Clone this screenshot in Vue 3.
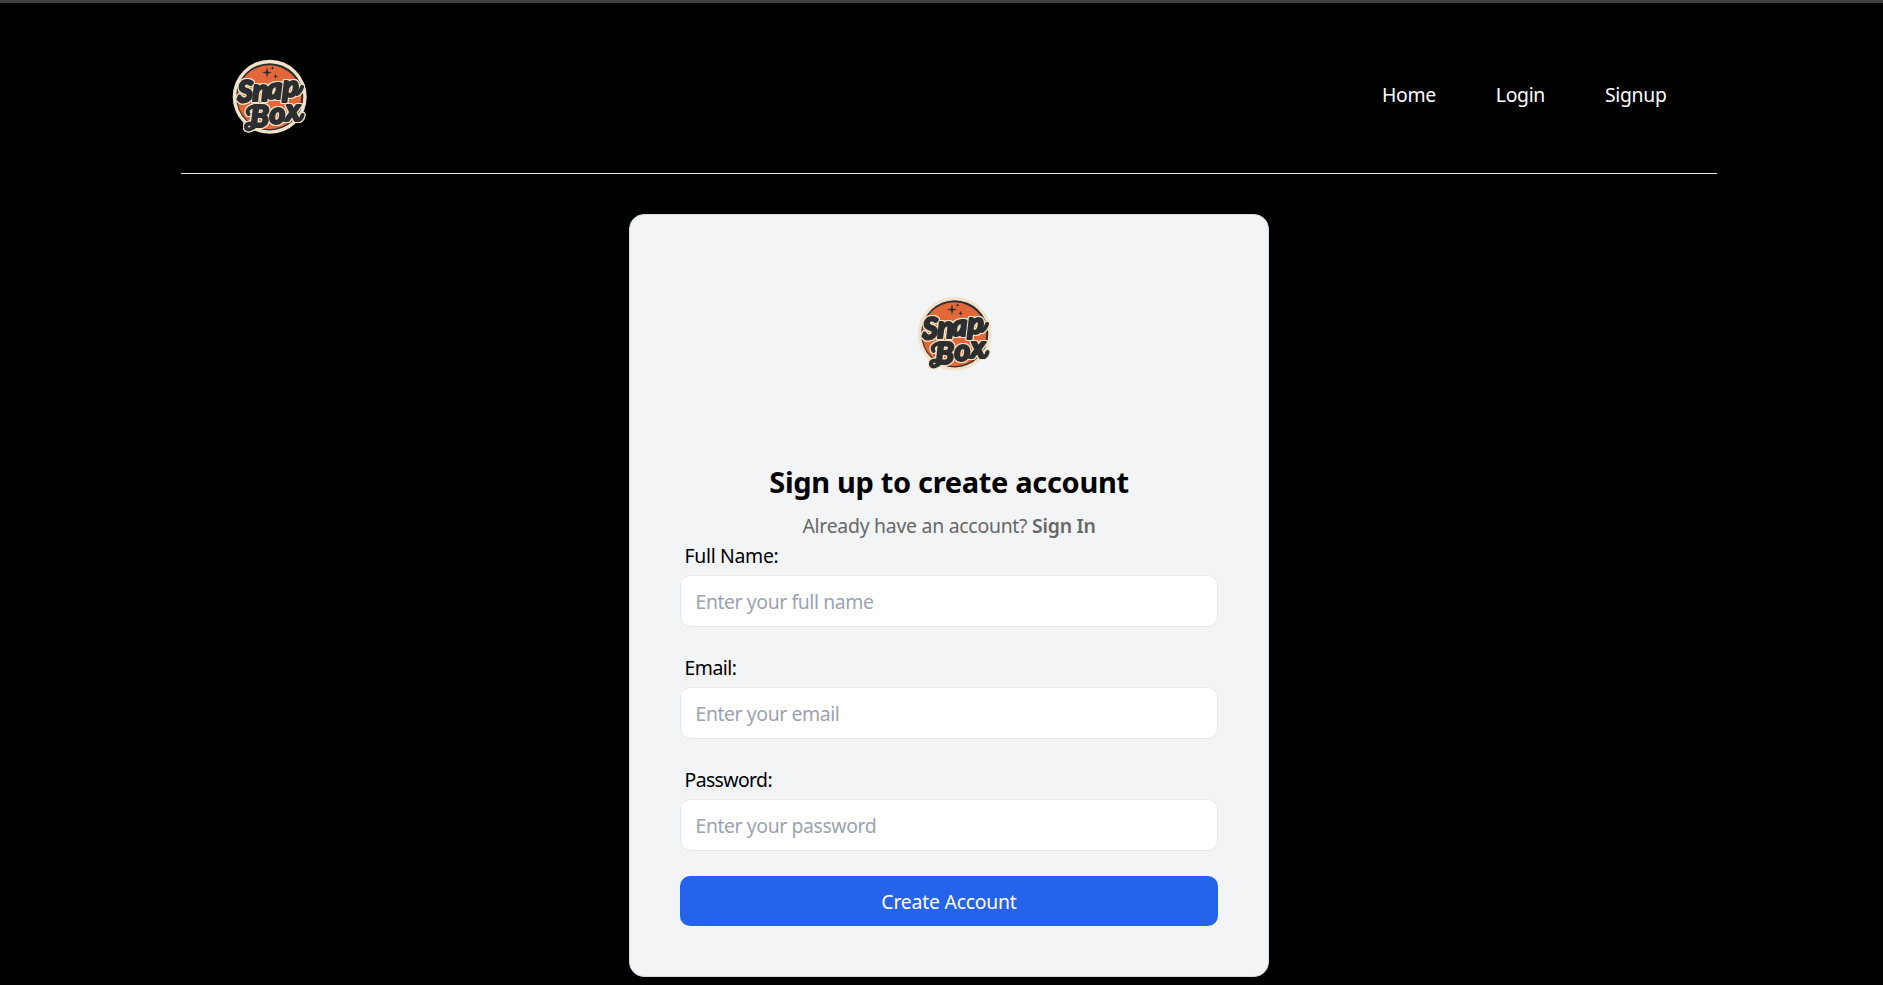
<script setup>
import { h } from 'vue'

const links = ['Home', 'Login', 'Signup']
const fields = [
  { id: 'name', label: 'Full Name:', hint: 'Enter your full name', type: 'text' },
  { id: 'email', label: 'Email:', hint: 'Enter your email', type: 'email' },
  { id: 'password', label: 'Password:', hint: 'Enter your password', type: 'password' },
]

// Cream outline around each dark word
const halo = 'filter: drop-shadow(1px 0 0 #f3dfc4) drop-shadow(-1px 0 0 #f3dfc4) drop-shadow(0 1px 0 #f3dfc4) drop-shadow(0 -1px 0 #f3dfc4)'

const word = (text, x, y, swash) =>
  h('g', { style: halo }, [
    h('text', {
      x, y, 'font-size': 30, fill: '#2d2e2f', stroke: '#2d2e2f', 'stroke-width': 2.1,
      'font-family': 'Lato, "Open Sans", sans-serif', 'font-weight': 900, 'font-style': 'italic',
      'stroke-linejoin': 'round',
    }, text),
    h('path', { d: swash, fill: 'none', stroke: '#2d2e2f', 'stroke-width': 4, 'stroke-linecap': 'round', 'stroke-linejoin': 'round' }),
  ])

const Logo = () =>
  h('svg', { width: 100, height: 96, viewBox: '0 0 100 96', role: 'img' }, [
    h('circle', { cx: 49.7, cy: 48.8, r: 37, fill: '#f3e3cd' }),
    h('circle', { cx: 49.7, cy: 48.8, r: 33.6, fill: '#2f2e2e' }),
    h('circle', { cx: 49.3, cy: 49.2, r: 32, fill: '#e2683a' }),
    h('path', { d: 'M47 19 L48 23.4 L52 24.5 L48 25.6 L47 30 L46 25.6 L42 24.5 L46 23.4Z M55.5 25.5 L56.1 27.8 L58.3 28.4 L56.1 29 L55.5 31 L54.9 29 L53 28.4 L54.9 27.8Z M52.5 18.8 L53.9 20.2 L52.5 21.6 L51.1 20.2Z', fill: '#2f2e2e' }),
    word('Box', '30.5 49.5 65.5', '79 75.5 73.3', 'M38 58.5 C30 57.5 26 62 28.5 66 M35 78 C31 74 25.5 75.5 26 79.5 C27 83 33 81 36 77 M79 72 Q81.5 71 82.5 67'),
    word('Snap', '17.5 32.5 46.5 62.5', '54 52.5 51.2 49.2', 'M19.5 48.5 C18 53 22 54.5 26 53 M77 46 Q80.5 44 82 39'),
  ])
</script>

<template>
  <div class="page">
    <header class="header">
      <Logo />
      <nav class="nav">
        <a v-for="l in links" :key="l">{{ l }}</a>
      </nav>
    </header>
    <main class="card">
      <div class="brand"><Logo /></div>
      <h2 class="title">Sign up to create account</h2>
      <p class="sub">Already have an account? <a class="signin">Sign In</a></p>
      <form @submit.prevent>
        <div v-for="f in fields" :key="f.id" class="field">
          <label :for="f.id" :class="['label', f.id]">{{ f.label }}</label>
          <input :id="f.id" class="input" :type="f.type" :placeholder="f.hint" />
        </div>
        <button class="submit" type="submit">Create Account</button>
      </form>
    </main>
  </div>
</template>

<style>
body { background: #000; }
</style>

<style scoped>
.page {
  box-sizing: border-box;
  height: 985px;
  overflow: hidden;
  background: #000;
  border-top: 3px solid #404040;
  font-family: "Noto Sans", "Open Sans", sans-serif;
  font-size: 19.4px;
  line-height: 30px;
}
.header {
  box-sizing: border-box;
  width: 1536px;
  height: 171px;
  margin-left: 181px;
  border-bottom: 1px solid #e5e7eb;
  padding: 45px 50.5px 0 39px;
  display: flex;
  justify-content: space-between;
  align-items: flex-start;
}
.nav { display: flex; gap: 60px; padding-top: 32px; color: #fff; letter-spacing: -0.33px; }
.card {
  box-sizing: border-box;
  width: 640px;
  height: 763px;
  margin: 40px 0 0 629px;
  padding: 70px 50px 0;
  border: 1px solid #d9dadd;
  border-radius: 15px;
  background: #f3f4f6;
}
.brand { display: flex; padding-left: 225px; height: 168px; }
.title { margin: 10px 0 0; font-size: 29px; line-height: 38px; font-weight: 700; text-align: center; letter-spacing: -0.32px; }
.sub { margin: 10px 0 0; text-align: center; color: #666769; line-height: 30px; letter-spacing: -0.25px; }
.signin { font-weight: 600; }
.field { margin-bottom: 26px; }
.field:last-of-type { margin-bottom: 25px; }
.label { display: block; padding-left: 4.5px; height: 34px; line-height: 30px; letter-spacing: -0.3px; }
.label.email { letter-spacing: -0.5px; }
.label.password { letter-spacing: -0.6px; }
.input {
  box-sizing: border-box;
  display: block;
  width: 538px;
  height: 52px;
  border: 1px solid #e5e7eb;
  border-radius: 10px;
  padding: 0 14.5px;
  background: #fff;
  font: inherit;
  letter-spacing: -0.4px;
}
.input::placeholder { color: #9ca3af; opacity: 1; }
.submit {
  display: block;
  width: 538px;
  height: 50px;
  border: 0;
  border-radius: 10px;
  padding: 2px 0 0;
  background: #2563eb;
  color: #fff;
  font: inherit;
  letter-spacing: -0.22px;
}
</style>
